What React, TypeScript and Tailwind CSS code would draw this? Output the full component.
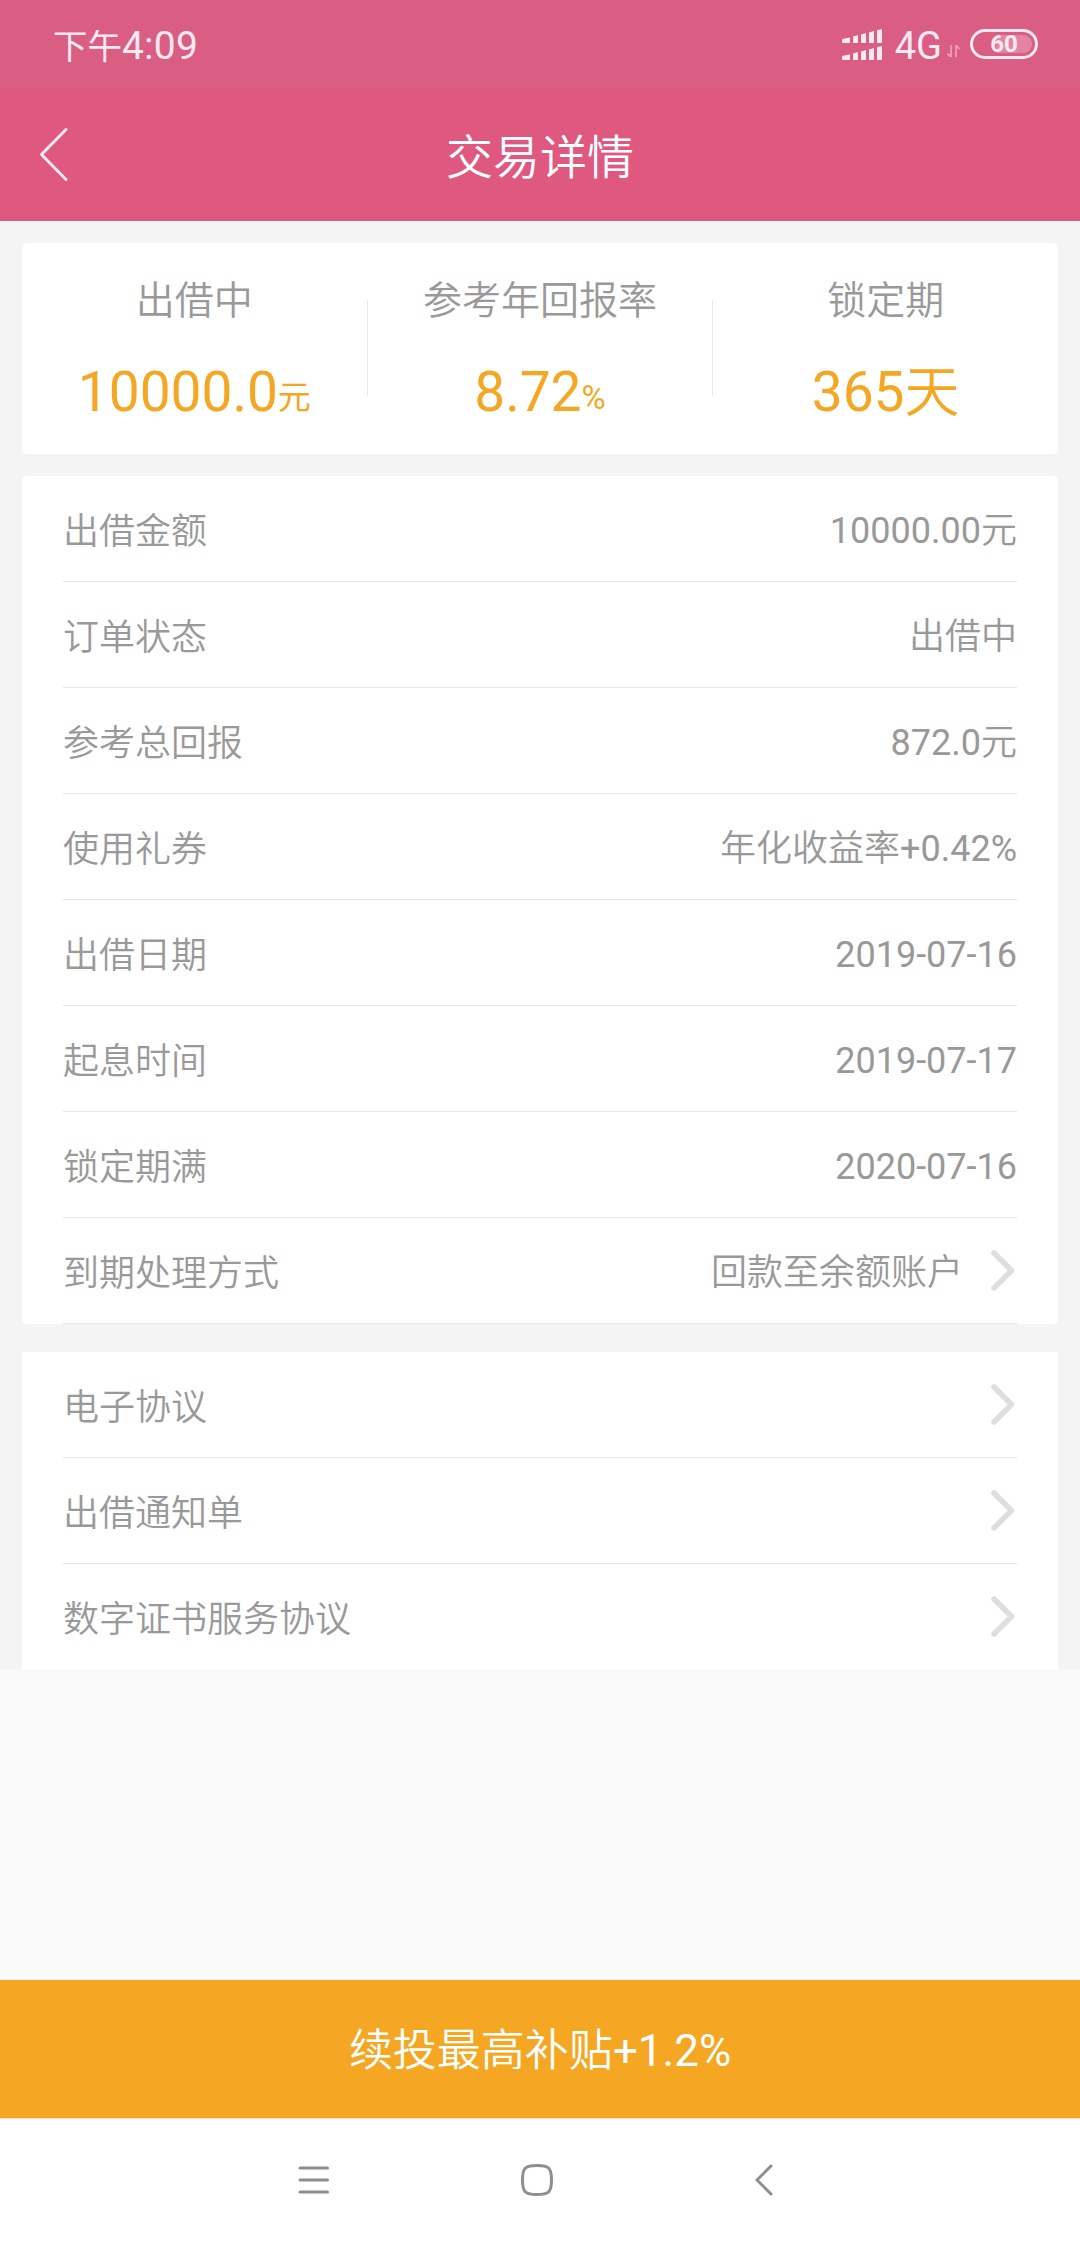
import React from 'react';

interface DetailRow {
  label: string;
  value?: string;
  arrow?: boolean;
}

const details: DetailRow[] = [
  { label: '出借金额', value: '10000.00元' },
  { label: '订单状态', value: '出借中' },
  { label: '参考总回报', value: '872.0元' },
  { label: '使用礼券', value: '年化收益率+0.42%' },
  { label: '出借日期', value: '2019-07-16' },
  { label: '起息时间', value: '2019-07-17' },
  { label: '锁定期满', value: '2020-07-16' },
  { label: '到期处理方式', value: '回款至余额账户', arrow: true },
];

const agreements: DetailRow[] = [
  { label: '电子协议', arrow: true },
  { label: '出借通知单', arrow: true },
  { label: '数字证书服务协议', arrow: true },
];

// Chinese runs are set a little lighter than the digits around them
function Mixed({ text }: { text: string }) {
  return (
    <>
      {text.split(/([\u4e00-\u9fff]+)/).map((part, i) => (
        <span key={i} className={i % 2 ? 'font-[350]' : 'font-normal'}>
          {part}
        </span>
      ))}
    </>
  );
}

function SignalIcon() {
  return (
    <svg width="40" height="31" viewBox="0 0 40 31" fill="#ffe9f1">
      {[0, 17].map((y) => (
        <g key={y} transform={`translate(0 ${y})`}>
          <path d="M0 11Q0 10 1 9.8L8 8.4V14H1Q0 14 0 13Z" />
          <path d="M11 7.6L16 6V14H11Z" />
          <path d="M19 5.4L24 4V14H19Z" />
          <path d="M27 3.4L32 2V14H27Z" />
          <path d="M35 1.2L40 0V13Q40 14 39 14H35Z" />
        </g>
      ))}
    </svg>
  );
}

function StatusBar() {
  return (
    <div className="flex h-[88px] items-start justify-between bg-[#da5d83] pl-[53px] pr-[42px] text-[#ffe9f1]">
      <div className="mt-[23px] flex items-baseline leading-[46px]">
        <span className="text-[34.5px]">下午</span>
        <span className="text-[39px] tracking-[0.2px]">4:09</span>
      </div>
      <div className="flex items-start">
        <div className="mt-[29px]">
          <SignalIcon />
        </div>
        <span className="ml-[13px] mt-[23px] text-[38px] leading-[46px]">4G</span>
        <svg className="ml-[5px] mt-[45px]" width="13" height="12" viewBox="0 0 13 12" fill="none" stroke="#f0a5bd" strokeWidth="1.6">
          <path d="M4 0V12L0.5 8.5" />
          <path d="M9 12V0.5L12.5 4" />
        </svg>
        <div className="relative ml-[10px] mt-[29px] flex h-[30px] w-[68px] items-center justify-center rounded-full border-[3px] border-[#ffe9f1]">
          <div className="absolute right-[3px] top-[3px] h-[18px] w-[36px] rounded-r-full bg-[#e484a4]" />
          <span className="relative text-[24px] font-bold leading-none">60</span>
        </div>
      </div>
    </div>
  );
}

function TitleBar() {
  return (
    <div className="grid h-[133px] grid-cols-[200px_1fr_200px] border-b border-[#c8607f] bg-[#df587f]">
      <svg className="ml-[39px] mt-[39px]" width="30" height="55" viewBox="0 0 30 55" fill="none" stroke="#ffe9f1" strokeWidth="3" strokeLinecap="round" strokeLinejoin="round">
        <path d="M27 2.5L2.5 27.5L27 52.5" />
      </svg>
      <h1 className="mt-[38px] text-center text-[47px] font-[350] leading-[64px] text-white">交易详情</h1>
    </div>
  );
}

function SummaryItem({ label, amount, unit }: { label: string; amount: string; unit?: string }) {
  return (
    <div className="flex flex-col items-center">
      <span className="mt-[33px] text-[39px] font-[350] leading-[50px] text-[#999]">{label}</span>
      <div className="mt-[34px] flex items-baseline leading-[64px] text-[#f5a623]">
        <span className="text-[55px]">
          <Mixed text={amount} />
        </span>
        {unit && <span className="relative -top-[2px] text-[33px]">{unit}</span>}
      </div>
    </div>
  );
}

function Summary() {
  return (
    <div className="grid h-[211px] grid-cols-[1fr_1px_1fr_1px_1fr] rounded-[5px] bg-white">
      <SummaryItem label="出借中" amount="10000.0" unit="元" />
      <div className="mt-[57px] h-[96px] bg-[#e8e8e8]" />
      <SummaryItem label="参考年回报率" amount="8.72" unit="%" />
      <div className="mt-[57px] h-[96px] bg-[#e8e8e8]" />
      <SummaryItem label="锁定期" amount="365天" />
    </div>
  );
}

function Row({ label, value, arrow }: DetailRow) {
  return (
    <div className="flex h-[106px] items-center border-b border-[#e8e8e8] text-[36px] leading-[48px] text-[#999]">
      <span className="mt-[6px] font-[350]">{label}</span>
      <span className="ml-auto mt-[4px]">{value && <Mixed text={value} />}</span>
      {arrow && (
        <svg className="ml-[28px] mr-[2px]" width="24" height="41" viewBox="0 0 24 41" fill="none" stroke="#dedede" strokeWidth="5.5" strokeLinecap="round" strokeLinejoin="round">
          <path d="M3 3L20.5 20.5L3 38" />
        </svg>
      )}
    </div>
  );
}

function NavBar() {
  return (
    <div className="flex h-[130px] items-start border-t border-[#fbe6c0] bg-white pl-[298px] pt-[45px]">
      <svg width="32" height="32" viewBox="0 0 32 32" stroke="#8e8e8e" strokeWidth="3" strokeLinecap="round">
        <path d="M2 4H29.5M2 16H29.5M2 28H29.5" />
      </svg>
      <svg className="ml-[191px]" width="32" height="32" viewBox="0 0 32 32" fill="none" stroke="#8e8e8e" strokeWidth="3">
        <path d="M1.5 16C1.5 4 4 1.5 16 1.5S30.5 4 30.5 16S28 30.5 16 30.5S1.5 28 1.5 16Z" />
      </svg>
      <svg className="ml-[202px]" width="18" height="32" viewBox="0 0 18 32" fill="none" stroke="#8e8e8e" strokeWidth="3" strokeLinecap="round" strokeLinejoin="round">
        <path d="M16 2L2 16L16 30" />
      </svg>
    </div>
  );
}

export default function App() {
  return (
    <div className="flex h-[2248px] w-[1080px] flex-col overflow-hidden bg-[#fafafa] font-['Roboto','Noto_Sans_CJK_SC',sans-serif]">
      <StatusBar />
      <TitleBar />

      <div className="bg-[#f4f4f4] px-[22px] pt-[22px]">
        <Summary />
        <div className="mt-[22px] rounded-[5px] bg-white px-[41px]">
          {details.map((row) => (
            <Row key={row.label} {...row} />
          ))}
        </div>
        {/* Last divider is cut off by the end of the list */}
        <div className="mt-[28px] h-[317px] overflow-hidden bg-white px-[41px]">
          {agreements.map((row) => (
            <Row key={row.label} {...row} />
          ))}
        </div>
      </div>

      <button className="mt-auto h-[138px] w-full bg-[#f5a623] pt-[4px] text-[44px] leading-[60px] text-white">
        <Mixed text="续投最高补贴+1.2%" />
      </button>
      <NavBar />
    </div>
  );
}
